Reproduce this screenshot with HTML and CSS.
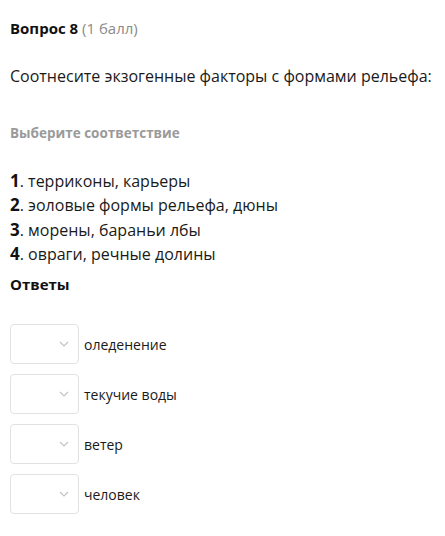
FILE: index.html
```html
<!DOCTYPE html>
<html>
<head>
<meta charset="utf-8">
<link rel="stylesheet" href="styles.css">
</head>
<body>
<div class="page">
  <div class="title"><b>Вопрос 8</b> <span class="pts">(1 балл)</span></div>
  <div class="question">Соотнесите экзогенные факторы с формами рельефа:</div>
  <div class="hint">Выберите соответствие</div>
  <ol class="items">
    <li><b>1</b>. терриконы, карьеры</li>
    <li><b>2</b>. эоловые формы рельефа, дюны</li>
    <li><b>3</b>. морены, бараньи лбы</li>
    <li><b>4</b>. овраги, речные долины</li>
  </ol>
  <div class="answers-title">Ответы</div>
  <div class="answers">
    <div class="row"><div class="select"><svg width="10" height="6" viewBox="0 0 10 6"><path d="M1 1 L5 5 L9 1" fill="none" stroke="#c4c4c4" stroke-width="1.2"/></svg></div><span>оледенение</span></div>
    <div class="row"><div class="select"><svg width="10" height="6" viewBox="0 0 10 6"><path d="M1 1 L5 5 L9 1" fill="none" stroke="#c4c4c4" stroke-width="1.2"/></svg></div><span>текучие воды</span></div>
    <div class="row"><div class="select"><svg width="10" height="6" viewBox="0 0 10 6"><path d="M1 1 L5 5 L9 1" fill="none" stroke="#c4c4c4" stroke-width="1.2"/></svg></div><span>ветер</span></div>
    <div class="row"><div class="select"><svg width="10" height="6" viewBox="0 0 10 6"><path d="M1 1 L5 5 L9 1" fill="none" stroke="#c4c4c4" stroke-width="1.2"/></svg></div><span>человек</span></div>
  </div>
</div>
</body>
</html>
```
FILE: styles.css
```css
html, body { margin: 0; padding: 0; background: #fff; }
body { font-family: "Open Sans", "Liberation Sans", sans-serif; color: #1a1a1a; }
.page { padding: 18px 10px 0 10px; }
.title { font-size: 15px; line-height: 20px; }
.title b { font-weight: 700; color: #111; }
.pts { color: #8a8a8a; }
.question { font-size: 16px; line-height: 22px; margin-top: 27px; }
.hint { font-size: 13.5px; font-weight: 700; color: #9a9a9a; line-height: 20px; margin-top: 36px; }
.items { list-style: none; margin: 26px 0 0 0; padding: 0; font-size: 16px; line-height: 23.3px; }
.items b { font-size: 17px; font-weight: 700; color: #111; }
.answers-title { font-size: 15px; font-weight: 700; color: #111; line-height: 20px; margin-top: 8px; }
.answers { margin-top: 30px; display: flex; flex-direction: column; gap: 10px; }
.row { display: flex; align-items: center; gap: 5px; font-size: 14px; }
.select { height: 38px; width: 58px; padding-right: 9px; border: 1px solid #e2e2e2; border-radius: 4px; display: flex; align-items: center; justify-content: flex-end; box-sizing: content-box; }
.select svg { display: block; }
```
